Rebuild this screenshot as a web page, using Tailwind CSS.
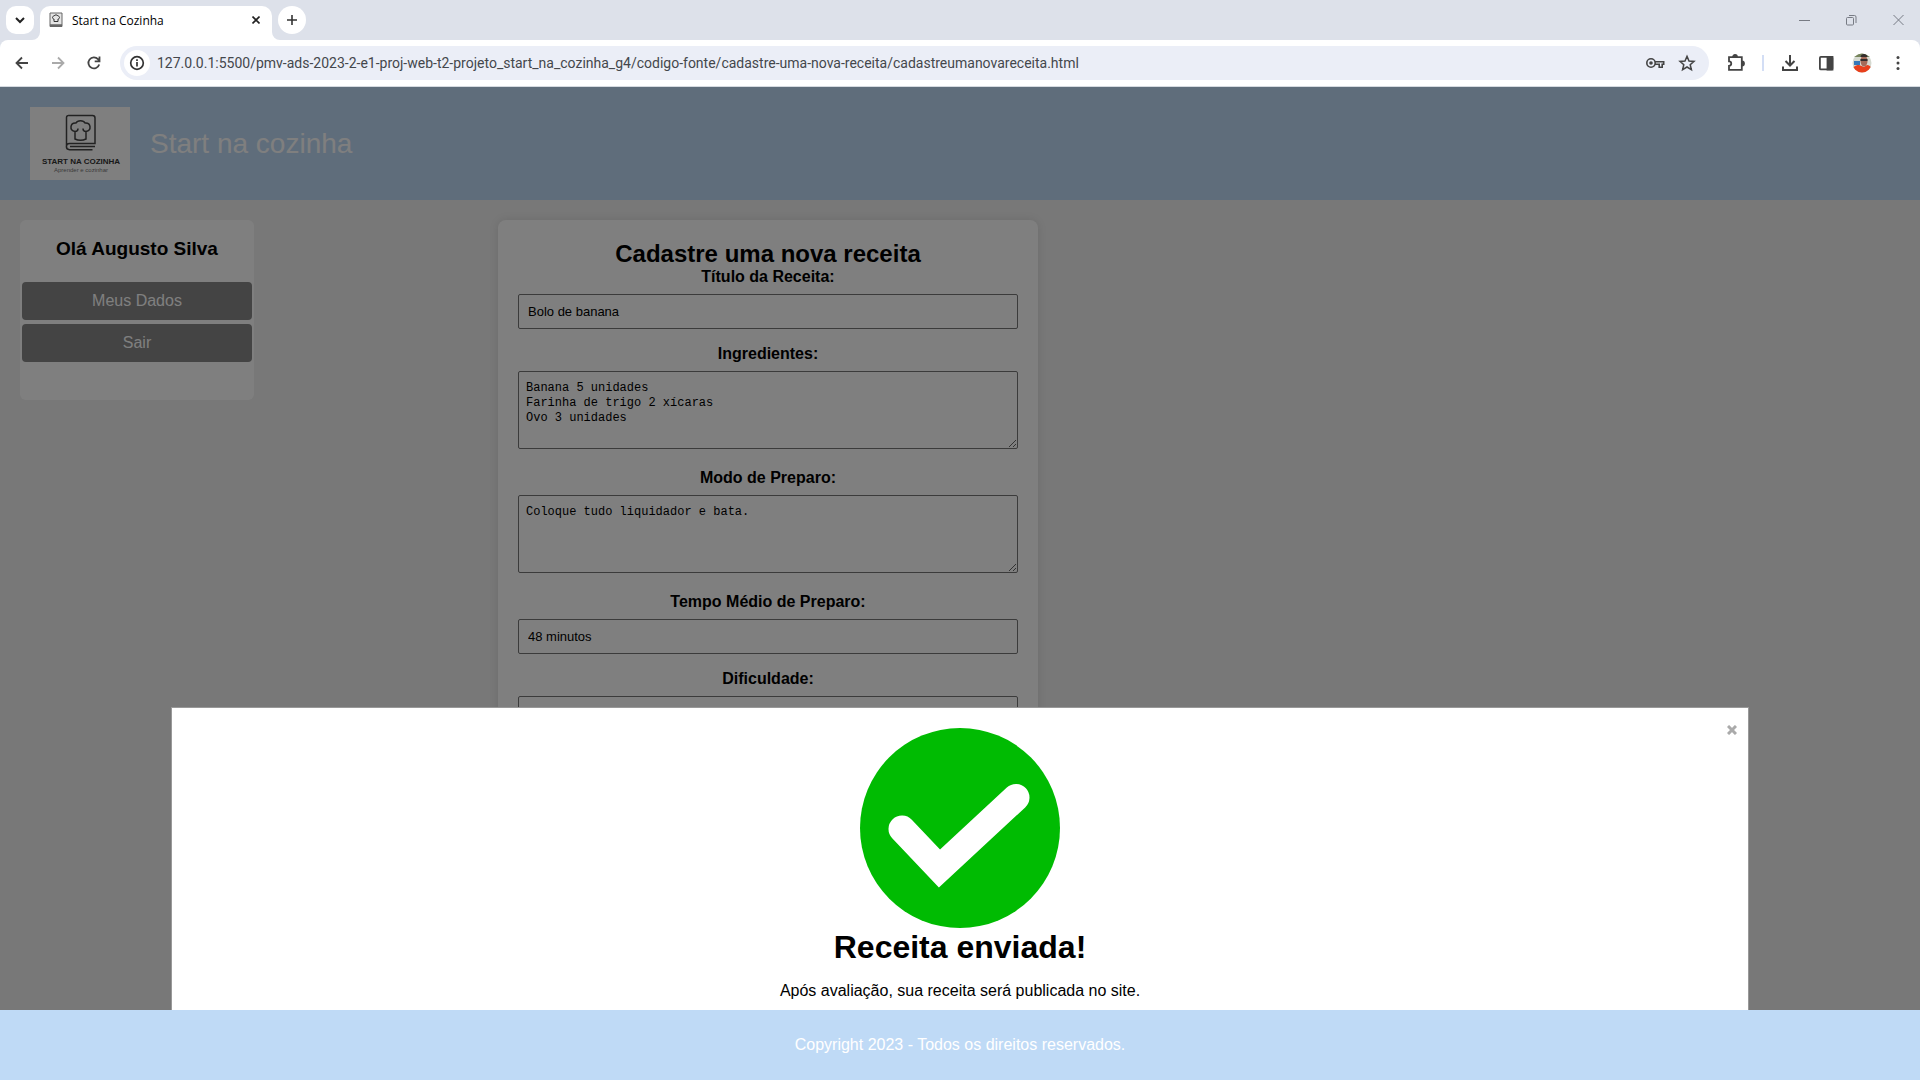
<!DOCTYPE html>
<html lang="pt-BR">
<head>
<meta charset="utf-8">
<title>Start na Cozinha</title>
<script src="https://cdn.jsdelivr.net/npm/@tailwindcss/browser@4"></script>
</head>
<body class="flex h-screen flex-col overflow-hidden bg-white font-['Liberation_Sans',Arial,sans-serif] text-black">

<!-- Browser window -->
<div class="shrink-0 bg-[#dde1ea] font-['Open_Sans','Noto_Sans',sans-serif]">
  <div class="flex h-10 items-start pl-1.5">
    <button aria-label="Pesquisar guias" class="mt-1.5 flex h-7 w-7 items-center justify-center rounded-[10px] bg-white">
      <svg class="h-3 w-3" viewBox="0 0 12 12" fill="none" stroke="#222" stroke-width="2"><path d="M2 4l4 4 4-4"/></svg>
    </button>
    <div class="relative mt-1.5 ml-1.5 flex h-[34px] w-[232px] items-center rounded-t-[10px] bg-white px-2">
      <svg class="absolute bottom-0 -left-2 h-2 w-2" viewBox="0 0 8 8" fill="#fff"><path d="M8 0v8H0a8 8 0 0 0 8-8z"/></svg>
      <svg class="absolute -right-2 bottom-0 h-2 w-2" viewBox="0 0 8 8" fill="#fff"><path d="M0 0v8h8a8 8 0 0 1-8-8z"/></svg>
      <svg class="mb-1.5 h-4 w-4" viewBox="0 0 16 16" fill="none" stroke="#666"><path d="M2 1h12v13.500H2z" fill="#e4e4e4"/><path d="M2 13.500h12" stroke-width="2.500"/><path d="M6 9.500V7C4 7 4 4 6 4c1-1.500 3-1.500 4 0 2 0 2 3 0 3v2.500z" stroke="#333"/></svg>
      <span class="mb-1 ml-2 grow text-xs leading-4">Start na Cozinha</span>
      <button aria-label="Fechar guia" class="mb-1.5 flex h-4 w-4 items-center justify-center"><svg class="h-2 w-2" viewBox="0 0 8 8" stroke="#222" stroke-width="1.600"><path d="M.5.5l7 7M7.500.5l-7 7"/></svg></button>
    </div>
    <button aria-label="Nova guia" class="mt-1.5 ml-1.5 flex h-7 w-7 items-center justify-center rounded-full bg-white">
      <svg class="h-2.5 w-2.5" viewBox="0 0 10 10" stroke="#333" stroke-width="1.600"><path d="M5 0v10M0 5h10"/></svg>
    </button>
    <div class="mt-[14px] mr-4 ml-auto flex items-center gap-9">
      <svg class="h-3 w-[11px]" viewBox="0 0 11 12" stroke="#777b84"><path d="M0 6.500h11"/></svg>
      <svg class="h-3 w-[11px]" viewBox="0 0 11 12" fill="none" stroke="#777b84"><rect x=".5" y="3.500" width="7" height="7.500" rx="1"/><path d="M3 1.500h5.500a1.500 1.500 0 0 1 1.500 1.500v6"/></svg>
      <svg class="h-3 w-[11px]" viewBox="0 0 11 12" stroke="#777b84"><path d="M.5 1l10 10M10.500 1l-10 10"/></svg>
    </div>
  </div>
  <div class="flex h-[47px] items-center rounded-t-lg border-b border-[#d5dae0] bg-white px-3">
    <button aria-label="Voltar" class="h-5 w-5"><svg viewBox="0 0 20 20" fill="none" stroke="#444" stroke-width="1.800"><path d="M16 10H4.500M10 4.500L4.500 10l5.500 5.500"/></svg></button>
    <button aria-label="Avançar" class="ml-4 h-5 w-5"><svg viewBox="0 0 20 20" fill="none" stroke="#aaa" stroke-width="1.800"><path d="M4 10h11.500M10 4.500l5.500 5.500-5.500 5.500"/></svg></button>
    <button aria-label="Recarregar" class="ml-4 h-5 w-5"><svg viewBox="0 0 20 20" fill="none" stroke="#444" stroke-width="1.800"><path d="M15.200 11.500A5.500 5.500 0 1 1 14 6.200l1 1.300M15.500 3.500v4.800h-4.800"/></svg></button>
    <div class="ml-4 flex h-[34px] grow items-center rounded-full bg-[#ebeef7] pr-3 pl-1">
      <span class="flex h-[26px] w-[26px] items-center justify-center rounded-full bg-white"><svg class="h-4 w-4" viewBox="0 0 16 16" fill="none" stroke="#333" stroke-width="1.700"><circle cx="8" cy="8" r="6.300"/><path d="M8 7v4.500M8 4.300v1.700"/></svg></span>
      <input aria-label="Endereço" class="ml-[7px] grow bg-transparent font-[Roboto,'Open_Sans',sans-serif] text-sm text-[#44474c]" value="127.0.0.1:5500/pmv-ads-2023-2-e1-proj-web-t2-projeto_start_na_cozinha_g4/codigo-fonte/cadastre-uma-nova-receita/cadastreumanovareceita.html">
      <svg class="h-5 w-5" viewBox="0 0 20 20" fill="none" stroke="#444" stroke-width="1.600"><circle cx="6" cy="10" r="4.200"/><circle cx="6" cy="10" r="1.800" fill="#444" stroke="none"/><path d="M10 8.800h8.700v2.500h-1.500v3h-3v-3H10"/></svg>
      <svg class="ml-3 h-5 w-5" viewBox="0 0 20 20" fill="none" stroke="#444" stroke-width="1.500"><path d="M10 3.300l2 4.700 5 .4-3.800 3.300 1.200 5-4.400-2.700-4.400 2.700 1.200-5L3 8.400 8 8z"/></svg>
    </div>
    <svg class="ml-[17px] h-5 w-5" viewBox="0 0 20 20" fill="none" stroke="#444" stroke-width="1.800"><path d="M3 4.200h12.800v12.600H3v-4c3 0 3-4.500 0-4.500z"/><path d="M7 4a2 2 0 0 1 4 0M16 8.500a2 2 0 0 1 0 4" fill="#444"/></svg>
    <span class="ml-4 h-4 w-0.5 bg-[#d3def5]"></span>
    <svg class="ml-4 h-5 w-5" viewBox="0 0 20 20" fill="none" stroke="#444" stroke-width="2"><path d="M10 2v10M5.500 8l4.500 4.500L14.500 8M3 13.500V17h14v-3.500"/></svg>
    <svg class="ml-4 h-5 w-5" viewBox="0 0 20 20" fill="none" stroke="#444" stroke-width="1.800"><rect x="3.900" y="3.900" width="12.500" height="12.500" rx="1"/><path d="M11.500 4h5v12.500h-5z" fill="#444"/></svg>
    <svg class="ml-4 h-5 w-5" viewBox="0 0 20 20"><clipPath id="av"><circle cx="10" cy="10" r="9.500"/></clipPath><g clip-path="url(#av)"><path fill="#d5d9d0" d="M0 0h20v20H0z"/><path fill="#76855c" d="M0 0h20v4H0z"/><path fill="#3778b8" d="M2 8h6v4H2z"/><path fill="#e8401c" d="M0 20c0-6 3-8 7-8l5 2 3-2c4 0 5 4 5 8z"/><ellipse cx="12" cy="8" rx="3.500" ry="5.500" fill="#a56b58"/><path fill="#332d2d" d="M8.500 4c0-4 7-4 7 0zM8.500 6h7v2h-7z"/></g></svg>
    <svg class="ml-4 h-5 w-5" viewBox="0 0 20 20" fill="#444"><circle cx="10" cy="4.500" r="1.500"/><circle cx="10" cy="10" r="1.500"/><circle cx="10" cy="15.500" r="1.500"/></svg>
  </div>
</div>

<!-- Page -->
<div class="relative min-h-0 grow overflow-hidden bg-[#f0f0f0]">
  <header class="flex items-center gap-5 bg-[#bfdaf6] px-[30px] py-5">
    <svg class="h-[73px] w-[100px] bg-white" viewBox="0 0 100 73" fill="none" stroke="#444">
      <path d="M39 8.500h23.500a2.500 2.500 0 0 1 2.500 2.500v25.500H39.500a3 3 0 0 0 0 6.200h23M36.500 39.500V10.500a2 2 0 0 1 2.500-2M40 39.600h25" stroke-width="1.500"/>
      <path d="M45 32V24.500c-6-1-5-9 1-8.500 1.500-3 7.500-3 9 0 6-.5 7 7.500 1 8.500V32c-3 1.500-8 1.500-11 0zM45 24.500c2 0 3-1 3-3M56 24.500c-2 0-3-1-3-3" stroke-width="1.500"/>
      <text x="51" y="57" text-anchor="middle" font-family="Liberation Sans, sans-serif" font-size="8" font-weight="700" fill="#333" stroke="none">START NA COZINHA</text>
      <text x="51" y="65" text-anchor="middle" font-family="Liberation Sans, sans-serif" font-size="6" fill="#777" stroke="none">Aprender e cozinhar</text>
    </svg>
    <span class="text-[28px] leading-8 text-white">Start na cozinha</span>
  </header>

  <div class="flex items-start px-5 pt-5">
    <aside class="h-[180px] w-[234px] rounded-md bg-white px-0.5 pt-[18px] text-center">
      <h3 class="text-[19px] leading-[22px] font-bold">Olá Augusto Silva</h3>
      <nav class="mt-[22px] flex flex-col gap-1 text-base text-white">
        <a href="#" class="block rounded bg-[#888] py-2.5 leading-[18px]">Meus Dados</a>
        <a href="#" class="block rounded bg-[#888] py-2.5 leading-[18px]">Sair</a>
      </nav>
    </aside>
    <main class="ml-[244px] w-[540px] rounded-lg bg-white p-5 text-center shadow-[0_0_10px_rgba(0,0,0,0.1)]">
      <h2 class="text-2xl leading-[27px] font-bold">Cadastre uma nova receita</h2>
      <form>
        <label for="titulo" class="mb-[7px] block leading-5 font-bold">Título da Receita:</label>
        <input id="titulo" value="Bolo de banana" class="mb-[15px] block h-[35px] w-full rounded-xs border border-[#767676] px-[9px] text-[13px]">
        <label for="ingredientes" class="mb-[7px] block leading-5 font-bold">Ingredientes:</label>
        <textarea id="ingredientes" class="mb-[19px] block h-[78px] w-full resize rounded-xs border border-[#767676] px-[7px] py-[9px] font-['Liberation_Mono',monospace] text-xs leading-[15px]">Banana 5 unidades
Farinha de trigo 2 xícaras
Ovo 3 unidades</textarea>
        <label for="preparo" class="mb-[7px] block leading-5 font-bold">Modo de Preparo:</label>
        <textarea id="preparo" class="mb-[19px] block h-[78px] w-full resize rounded-xs border border-[#767676] px-[7px] py-[9px] font-['Liberation_Mono',monospace] text-xs leading-[15px]">Coloque tudo liquidador e bata.</textarea>
        <label for="tempo" class="mb-[7px] block leading-5 font-bold">Tempo Médio de Preparo:</label>
        <input id="tempo" value="48 minutos" class="mb-[15px] block h-[35px] w-full rounded-xs border border-[#767676] px-[9px] text-[13px]">
        <label for="dificuldade" class="mb-[7px] block leading-5 font-bold">Dificuldade:</label>
        <input id="dificuldade" class="block h-[35px] w-full rounded-xs border border-[#767676] px-[9px] text-[13px]">
      </form>
    </main>
  </div>

  <!-- Confirmation dialog -->
  <div class="absolute inset-0 flex flex-col items-center justify-end bg-black/50">
    <div role="dialog" aria-labelledby="enviada" class="relative box-content flex w-4/5 flex-col items-center border border-b-0 border-[#999] bg-white px-5 pt-5 pb-2.5">
      <button aria-label="Fechar" class="absolute top-4 right-2.5 flex h-3 w-3 items-center justify-center"><svg class="h-2.5 w-2.5" viewBox="0 0 10 10" stroke="#aaa" stroke-width="3"><path d="M1 1l8 8M9 1L1 9"/></svg></button>
      <svg class="h-[200px] w-[200px]" viewBox="0 0 200 200" fill="none"><circle cx="100" cy="100" r="100" fill="#00bb02"/><path d="M42 101l37.500 39.500L156 69.500" stroke="#fff" stroke-width="27" stroke-linecap="round"/></svg>
      <h1 id="enviada" class="text-[32px] leading-[39px] font-bold">Receita enviada!</h1>
      <p class="mt-[15px] leading-[18px]">Após avaliação, sua receita será publicada no site.</p>
    </div>
  </div>
</div>

<footer class="flex h-[70px] shrink-0 items-center justify-center bg-[#bfdaf6] text-white">Copyright 2023 - Todos os direitos reservados.</footer>
</body>
</html>
